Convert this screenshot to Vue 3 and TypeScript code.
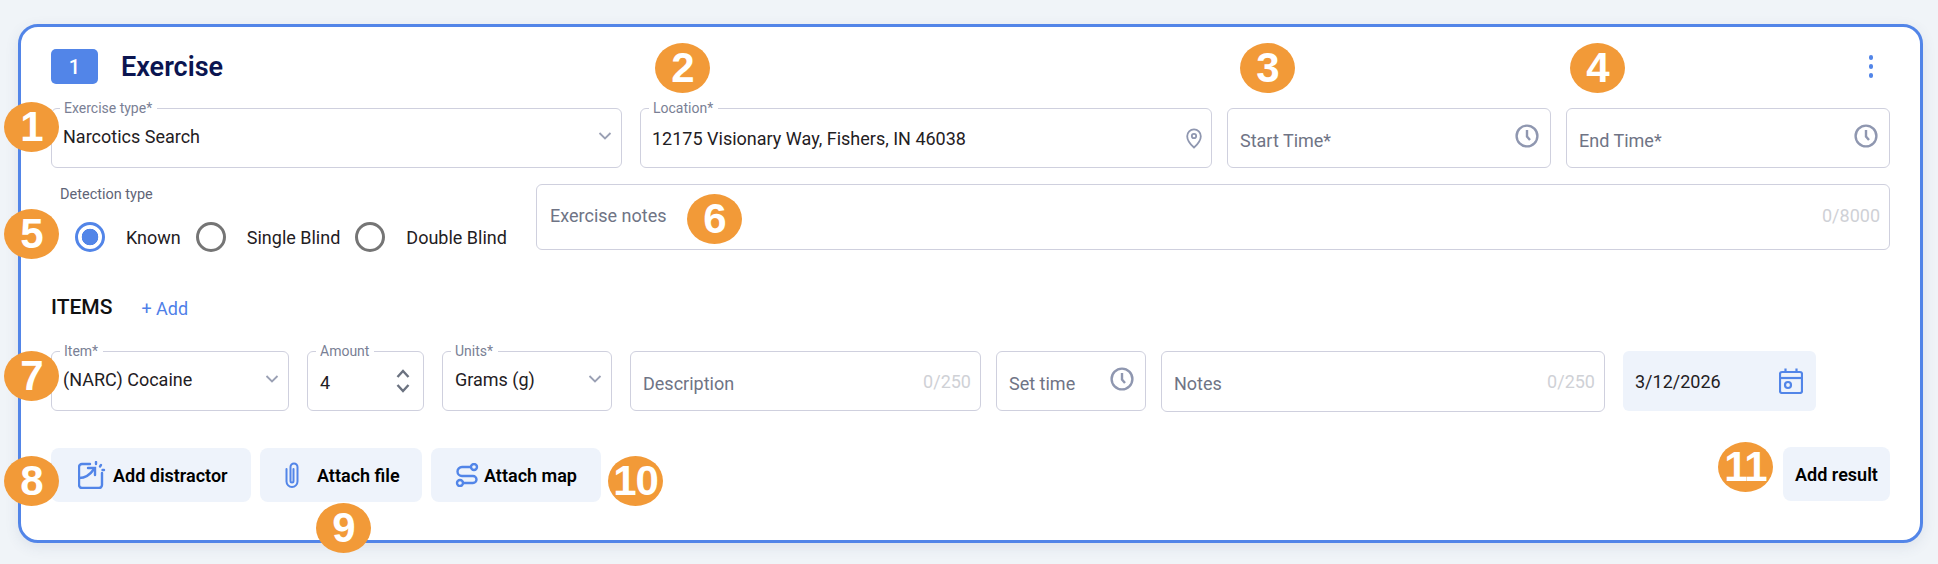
<template>
  <div class="page">
    <section class="card">
      <!-- header -->
      <header class="card-head">
        <span class="step-badge">1</span>
        <h2 class="card-title">Exercise</h2>
        <span class="kebab"><i></i><i></i><i></i></span>
      </header>

      <!-- first row -->
      <div class="row first-row">
        <div class="field w-type text-up">
          <label class="legend">Exercise type*</label>
          <span class="value">Narcotics Search</span>
          <svg class="chev" viewBox="0 0 14 8" fill="none" stroke="currentColor" stroke-width="1.8"><polyline points="1.5 1 7 6.5 12.5 1" /></svg>
        </div>
        <div class="field w-loc gap-wide">
          <label class="legend">Location*</label>
          <span class="value">12175 Visionary Way, Fishers, IN 46038</span>
          <svg class="pin" width="20" height="22" viewBox="0 0 20 22" fill="none" stroke="currentColor" stroke-width="1.8">
            <path d="M10 20.5C6 17 3.2 13.6 3.2 9.2a6.8 6.8 0 0 1 13.6 0c0 4.4-2.8 7.8-6.8 11.3z" />
            <circle cx="10" cy="9" r="2.2" />
          </svg>
        </div>
        <div class="field w-time placeholder-low">
          <span class="placeholder">Start Time*</span>
          <svg class="clock" width="24" height="24" viewBox="0 0 24 24" fill="none" stroke="currentColor" stroke-width="2.4">
            <circle cx="12" cy="12" r="10.4" /><polyline points="12 6 12 12.5 15 16" />
          </svg>
        </div>
        <div class="field w-time placeholder-low">
          <span class="placeholder">End Time*</span>
          <svg class="clock" width="24" height="24" viewBox="0 0 24 24" fill="none" stroke="currentColor" stroke-width="2.4">
            <circle cx="12" cy="12" r="10.4" /><polyline points="12 6 12 12.5 15 16" />
          </svg>
        </div>
      </div>

      <!-- detection type and notes -->
      <div class="row second-row">
        <div class="detection">
          <div class="detection-label">Detection type</div>
          <div class="radios">
            <template v-for="opt in detectionTypes" :key="opt.label">
              <span class="radio" :class="{ checked: opt.checked }"></span>
              <span class="radio-text">{{ opt.label }}</span>
            </template>
          </div>
        </div>
        <div class="field notes-box">
          <span class="placeholder">Exercise notes</span>
          <span class="count">0/8000</span>
        </div>
      </div>

      <!-- items -->
      <div class="items-head">
        <span class="items-title">ITEMS</span>
        <a class="items-add">+ Add</a>
      </div>

      <div class="row item-row">
        <div class="field w-item text-up">
          <label class="legend">Item*</label>
          <span class="value">(NARC) Cocaine</span>
          <svg class="chev" viewBox="0 0 14 8" fill="none" stroke="currentColor" stroke-width="1.8"><polyline points="1.5 1 7 6.5 12.5 1" /></svg>
        </div>
        <div class="field w-amount gap-wide">
          <label class="legend">Amount</label>
          <span class="value amount-value">4</span>
          <svg class="spin" width="14" height="24" viewBox="0 0 14 24" fill="none" stroke="currentColor" stroke-width="2.4">
            <polyline points="1.5 8 7 2 12.5 8" /><polyline points="1.5 16 7 22 12.5 16" />
          </svg>
        </div>
        <div class="field w-units gap-wide text-up">
          <label class="legend">Units*</label>
          <span class="value">Grams (g)</span>
          <svg class="chev" viewBox="0 0 14 8" fill="none" stroke="currentColor" stroke-width="1.8"><polyline points="1.5 1 7 6.5 12.5 1" /></svg>
        </div>
        <div class="field w-desc gap-wide placeholder-low">
          <span class="placeholder">Description</span>
          <span class="count">0/250</span>
        </div>
        <div class="field w-set placeholder-low">
          <span class="placeholder">Set time</span>
          <svg class="clock" width="24" height="24" viewBox="0 0 24 24" fill="none" stroke="currentColor" stroke-width="2.4">
            <circle cx="12" cy="12" r="10.4" /><polyline points="12 6 12 12.5 15 16" />
          </svg>
        </div>
        <div class="field w-notes placeholder-low">
          <span class="placeholder">Notes</span>
          <span class="count">0/250</span>
        </div>
        <div class="date-box gap-wide">
          <span>3/12/2026</span>
          <svg width="24" height="26" viewBox="0 0 24 26" fill="none" stroke="#5285e8" stroke-width="2.2">
            <rect x="1" y="4" width="22" height="21" rx="2" />
            <line x1="1" y1="10" x2="23" y2="10" />
            <line x1="6.5" y1="0.5" x2="6.5" y2="4" />
            <line x1="17.5" y1="0.5" x2="17.5" y2="4" />
            <circle cx="9" cy="17" r="3" />
          </svg>
        </div>
      </div>

      <!-- actions -->
      <div class="actions">
        <button class="act w-distractor">
          <svg width="28" height="28" viewBox="0 0 28 28" fill="none" stroke="#5285e8" stroke-width="2.4" stroke-linecap="round">
            <path d="M12 3H4a3 3 0 0 0-3 3v18a3 3 0 0 0 3 3h17a3 3 0 0 0 3-3V12" />
            <path d="M1 17c6 0 11-3 15-9" />
            <polyline points="10 7 17 7 17 14" />
            <line x1="18" y1="1" x2="18" y2="3" />
            <line x1="23" y1="4" x2="22" y2="5.5" />
            <line x1="26" y1="9" x2="24.5" y2="9" />
          </svg>
          Add distractor
        </button>
        <button class="act w-file">
          <svg width="14" height="26" viewBox="0 0 14 26" fill="none" stroke="#5285e8" stroke-width="2" stroke-linecap="round">
            <path d="M1.5 7v12.5a5.5 5.5 0 0 0 11 0V5a3.5 3.5 0 0 0-7 0v14a1.5 1.5 0 0 0 3 0V7" />
          </svg>
          <span>Attach file</span>
        </button>
        <button class="act w-map">
          <svg width="24" height="24" viewBox="0 0 24 24" fill="none" stroke="#5285e8" stroke-width="2.4">
            <circle cx="19" cy="4" r="3" />
            <circle cx="5" cy="20" r="3" />
            <path d="M16 4H7a4.5 4.5 0 0 0 0 9h11a3.5 3.5 0 0 1 0 7H8" />
          </svg>
          Attach map
        </button>
        <button class="act add-result">Add result</button>
      </div>
    </section>

    <!-- numbered callouts on top of the screenshot -->
    <span
      v-for="mark in marks"
      :key="mark.n"
      class="mark"
      :style="{ left: mark.x + 'px', top: mark.y + 'px' }"
    >{{ mark.n }}</span>
  </div>
</template>

<script setup lang="ts">
interface Mark {
  n: number
  x: number
  y: number
}

const detectionTypes = [
  { label: 'Known', checked: true },
  { label: 'Single Blind', checked: false },
  { label: 'Double Blind', checked: false }
]

const marks: Mark[] = [
  { n: 1, x: 4, y: 102 },
  { n: 2, x: 655, y: 43 },
  { n: 3, x: 1240, y: 43 },
  { n: 4, x: 1570, y: 43 },
  { n: 5, x: 4, y: 209 },
  { n: 6, x: 687, y: 194 },
  { n: 7, x: 4, y: 351 },
  { n: 8, x: 4, y: 456 },
  { n: 9, x: 316, y: 503 },
  { n: 10, x: 608, y: 456 },
  { n: 11, x: 1718, y: 442 }
]
</script>

<style>
html,
body {
  margin: 0;
  background: #f0f4f8;
}
</style>

<style scoped>
.page {
  position: relative;
  height: 564px;
  box-sizing: border-box;
  padding: 24px 15px 0 18px;
  overflow: hidden;
  font-family: Roboto, "Noto Sans", sans-serif;
  color: #1f2023;
}

.card {
  width: 1905px;
  height: 519px;
  box-sizing: border-box;
  padding: 22px 30px 0;
  background: #fff;
  border: 3px solid #5285e8;
  border-radius: 20px;
  box-shadow: 0 4px 14px rgba(60, 80, 120, 0.1);
}

/* header */
.card-head {
  display: flex;
  align-items: center;
  height: 35px;
}

.step-badge {
  width: 47px;
  height: 35px;
  display: flex;
  align-items: center;
  justify-content: center;
  background: #5285e8;
  border-radius: 5px;
  color: #fff;
  font-size: 20px;
  font-weight: 500;
}

.card-title {
  margin: 0 0 0 23px;
  font-size: 27px;
  font-weight: 600;
  color: #0b1550;
}

.kebab {
  margin-left: auto;
  margin-right: 17px;
  display: flex;
  flex-direction: column;
  gap: 4.5px;
}

.kebab i {
  width: 4.5px;
  height: 4.5px;
  border-radius: 50%;
  background: #5285e8;
}

/* rows */
.row {
  display: flex;
  align-items: flex-start;
}

.first-row {
  margin-top: 24px;
}

.second-row {
  margin-top: 16px;
}

.item-row {
  margin-top: 32px;
  height: 60px;
}

/* fields */
.field {
  position: relative;
  height: 60px;
  box-sizing: border-box;
  margin-left: 15px;
  padding: 0 12px;
  display: flex;
  align-items: center;
  justify-content: space-between;
  border: 1px solid #cfd0de;
  border-radius: 6px;
  font-size: 18px;
}

.field:first-child {
  margin-left: 0;
  padding-left: 11px;
}

.gap-wide {
  margin-left: 18px;
}

.w-type { width: 571px; }
.w-loc { width: 572px; padding-left: 11px; }
.w-time { width: 324px; }
.w-item { width: 238px; }
.w-amount { width: 117px; }
.w-units { width: 170px; }
.w-desc { width: 351px; padding-right: 9px; }
.w-set { width: 150px; }
.w-notes { width: 444px; height: 61px; padding-right: 9px; }

.legend {
  position: absolute;
  top: -8px;
  left: 8px;
  padding: 0 5px 0 4px;
  background: #fff;
  font-size: 14px;
  line-height: 14px;
  color: #7a7f95;
}

.value {
  color: #1f2023;
}

.text-up {
  padding-bottom: 4px;
}

.placeholder-low .placeholder {
  padding-top: 4px;
}

.placeholder {
  color: #6f7485;
}

.count {
  font-size: 18px;
  color: #cfd1d6;
}

.chev {
  width: 14px;
  height: 8px;
  margin-right: -3px;
  color: #9aa0b4;
}

.pin {
  color: #8f97b0;
  margin-right: -5px;
}

.clock {
  color: #8f97b0;
  margin-top: -4px;
  margin-right: -1px;
}

.spin {
  color: #6b7280;
  margin-top: -1px;
  margin-right: 1px;
}

.amount-value {
  padding-top: 2px;
}

/* detection */
.detection {
  width: 485px;
  height: 66px;
  flex-shrink: 0;
}

.detection-label {
  padding-left: 9px;
  font-size: 14.5px;
  line-height: 22px;
  color: #5f6477;
}

.radios {
  margin-top: 16px;
  padding-left: 24px;
  display: flex;
  align-items: center;
}

.radio {
  width: 30px;
  height: 30px;
  box-sizing: border-box;
  flex-shrink: 0;
  border: 3px solid #757575;
  border-radius: 50%;
}

.radio.checked {
  border-color: #5285e8;
  background: radial-gradient(circle, #5285e8 0 8px, transparent 8.6px);
}

.radio-text {
  margin: 0 15px 0 21px;
  font-size: 18px;
  white-space: nowrap;
}

.notes-box {
  width: 1354px;
  height: 66px;
  margin-left: 0;
  padding: 0 9px 4px 13px;
}

/* items */
.items-head {
  margin-top: 45px;
  height: 24px;
  display: flex;
  align-items: center;
}

.items-title {
  font-size: 21px;
  font-weight: 500;
  color: #111;
}

.items-add {
  margin-left: 29px;
  padding-top: 3px;
  font-size: 18px;
  color: #4f80e8;
}

.date-box {
  width: 193px;
  height: 60px;
  box-sizing: border-box;
  padding: 0 13px 0 12px;
  display: flex;
  align-items: center;
  justify-content: space-between;
  background: #eef3fb;
  border-radius: 6px;
  font-size: 18px;
}

/* actions */
.actions {
  margin-top: 37px;
  display: flex;
  gap: 9px;
  align-items: flex-start;
}

.act {
  height: 54px;
  box-sizing: border-box;
  padding: 0;
  display: flex;
  align-items: center;
  justify-content: flex-start;
  background: #eef3fb;
  border: none;
  border-radius: 8px;
  font-family: inherit;
  font-size: 18px;
  font-weight: 600;
  color: #000;
  white-space: nowrap;
}

.w-distractor { width: 200px; gap: 7px; padding-left: 27px; }
.w-file { width: 162px; gap: 18px; padding-left: 25px; }
.w-map { width: 170px; gap: 5px; padding-left: 24px; }

.add-result {
  width: 107px;
  margin-left: auto;
  margin-top: -1px;
  justify-content: center;
}

/* callouts */
.mark {
  position: absolute;
  width: 55px;
  height: 50px;
  display: flex;
  align-items: center;
  justify-content: center;
  background: #f29a38;
  border-radius: 50%;
  color: #fff;
  font-family: "Liberation Sans", Arial, sans-serif;
  font-size: 42px;
  font-weight: 700;
  letter-spacing: -1px;
}
</style>
